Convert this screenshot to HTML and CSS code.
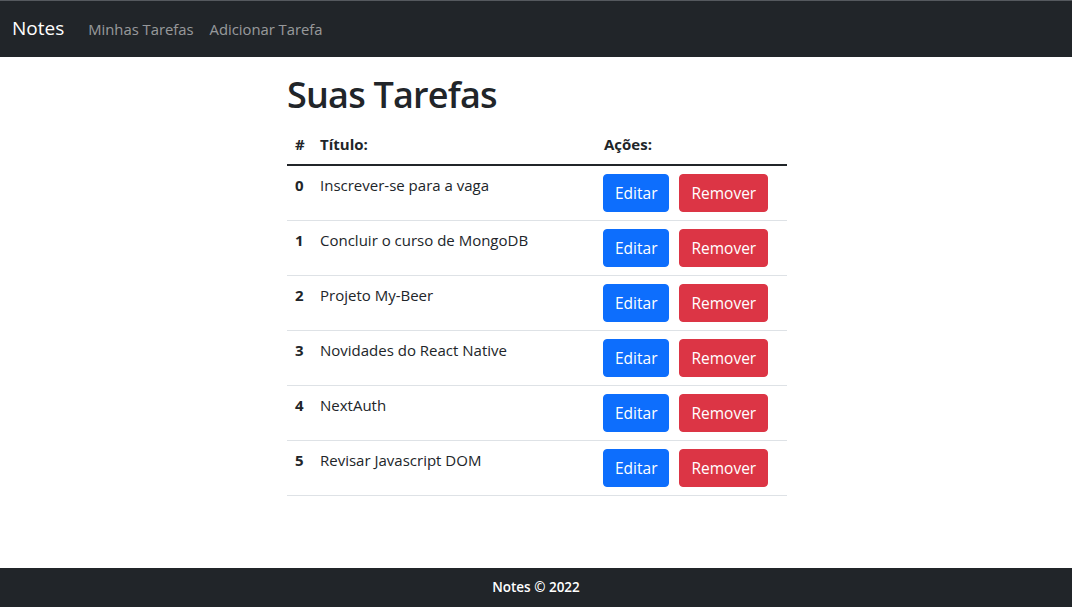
FILE: index.html
```html
<!DOCTYPE html>
<html lang="pt-BR">
<head>
<meta charset="utf-8">
<title>Notes</title>
<link rel="stylesheet" href="styles.css">
</head>
<body>
<div class="page">
  <nav class="navbar">
    <a class="brand" href="#">Notes</a>
    <a class="nav-link" href="#">Minhas Tarefas</a>
    <a class="nav-link" href="#">Adicionar Tarefa</a>
  </nav>
  <main class="main">
    <div class="content">
      <h1 class="title">Suas Tarefas</h1>
      <table class="table">
        <colgroup><col class="c-num"><col class="c-title"><col class="c-actions"></colgroup>
        <thead>
          <tr><th>#</th><th>Título:</th><th>Ações:</th></tr>
        </thead>
        <tbody>
          <tr><th>0</th><td>Inscrever-se para a vaga</td><td><div class="actions"><button class="btn btn-primary">Editar</button><button class="btn btn-danger">Remover</button></div></td></tr>
          <tr><th>1</th><td>Concluir o curso de MongoDB</td><td><div class="actions"><button class="btn btn-primary">Editar</button><button class="btn btn-danger">Remover</button></div></td></tr>
          <tr><th>2</th><td>Projeto My-Beer</td><td><div class="actions"><button class="btn btn-primary">Editar</button><button class="btn btn-danger">Remover</button></div></td></tr>
          <tr><th>3</th><td>Novidades do React Native</td><td><div class="actions"><button class="btn btn-primary">Editar</button><button class="btn btn-danger">Remover</button></div></td></tr>
          <tr><th>4</th><td>NextAuth</td><td><div class="actions"><button class="btn btn-primary">Editar</button><button class="btn btn-danger">Remover</button></div></td></tr>
          <tr><th>5</th><td>Revisar Javascript DOM</td><td><div class="actions"><button class="btn btn-primary">Editar</button><button class="btn btn-danger">Remover</button></div></td></tr>
        </tbody>
      </table>
    </div>
  </main>
  <footer class="footer">Notes © 2022</footer>
</div>
</body>
</html>
```

FILE: styles.css
```css
* { box-sizing: border-box; }
html, body { margin: 0; padding: 0; }
body {
  font-family: "Open Sans", "Noto Sans", "Liberation Sans", sans-serif;
  font-size: 16px;
  line-height: 1.5;
  color: #212529;
  background: #fff;
}
.page {
  min-height: 100vh;
  display: flex;
  flex-direction: column;
}
.navbar {
  height: 57px;
  background: #212529;
  border-top: 1px solid #55595e;
  display: flex;
  align-items: center;
  padding: 0 12px;
}
.brand {
  color: #fff;
  text-decoration: none;
  font-size: 19px;
  margin-right: 16px;
  padding-bottom: 2px;
}
.nav-link {
  color: rgba(255,255,255,.55);
  text-decoration: none;
  font-size: 14.8px;
  padding: 0 8px;
}
.main {
  flex: 1;
  display: flex;
  justify-content: center;
}
.content {
  width: 500px;
  margin-top: 15px;
  margin-left: 2px;
}
.title {
  font-size: 36px;
  font-weight: 600;
  line-height: 1.25;
  margin: 0 0 8px 0;
  letter-spacing: -0.8px;
}
.table {
  width: 100%;
  border-collapse: collapse;
  table-layout: fixed;
  font-size: 15px;
}
.c-num { width: 25px; }
.c-title { width: 284px; }
.table th, .table td {
  padding: 8px;
  text-align: left;
  vertical-align: top;
  border-bottom: 1px solid #dee2e6;
}
.table th { font-weight: 700; }
.table thead th { border-bottom: 2px solid #212529; }
.table tbody th { padding-right: 0; }
.actions {
  display: flex;
  gap: 10px;
  margin-left: -1px;
}
.btn {
  font-family: inherit;
  font-size: 15.5px;
  line-height: 24px;
  height: 38px;
  padding: 6px 11px;
  border: 1px solid transparent;
  border-radius: 4px;
  color: #fff;
  cursor: pointer;
}
.btn-primary { background: #0d6efd; border-color: #0d6efd; }
.btn-danger { background: #dc3545; border-color: #dc3545; }
.footer {
  height: 39px;
  background: #212529;
  color: #fff;
  font-size: 13.5px;
  font-weight: 600;
  display: flex;
  align-items: center;
  justify-content: center;
}
```
